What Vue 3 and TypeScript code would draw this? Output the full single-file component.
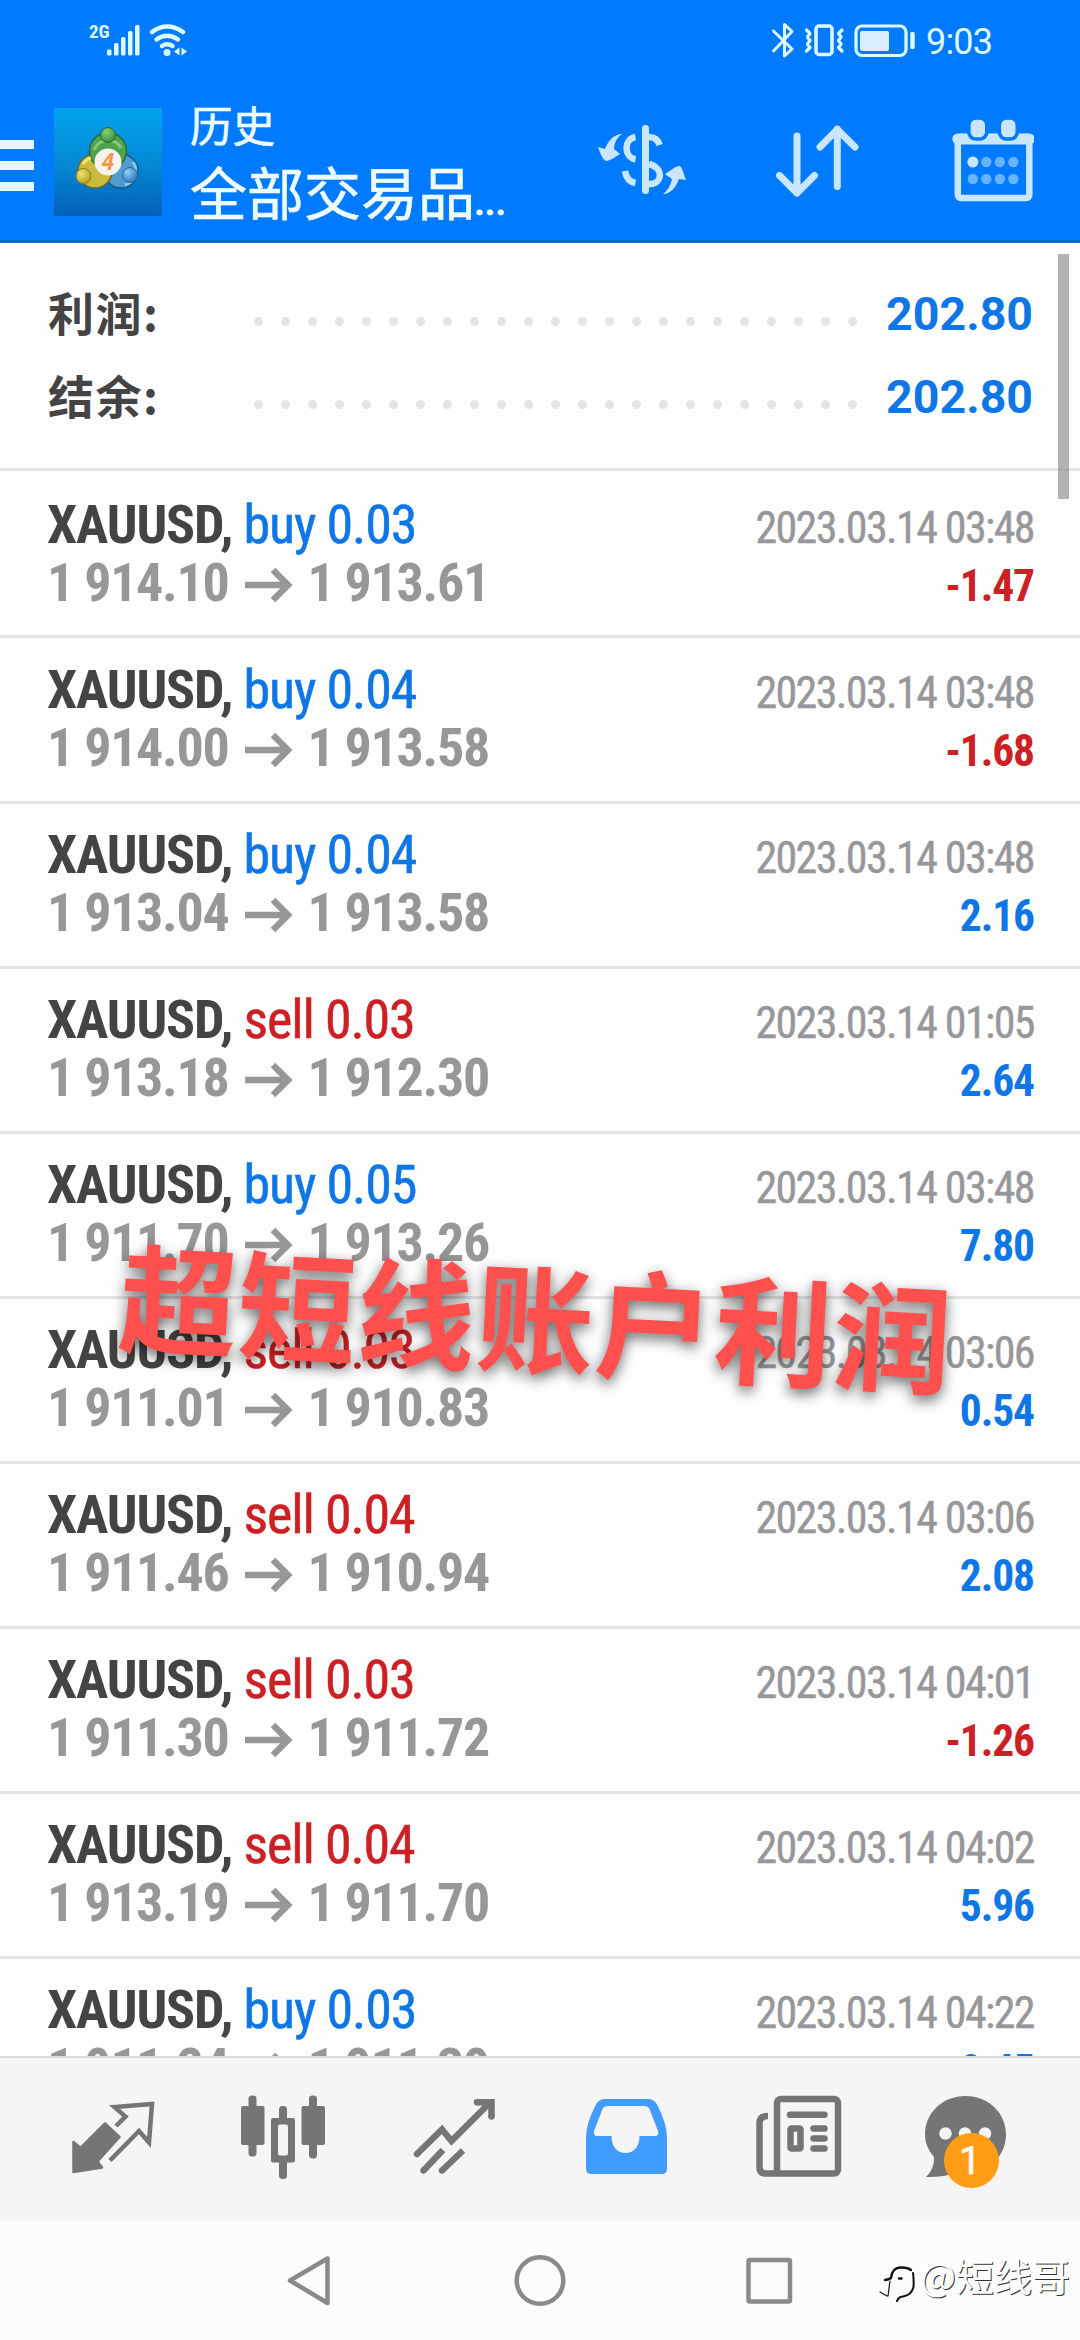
<script setup lang="ts">
interface Deal {
  side: 'buy' | 'sell'
  volume: string
  open: string
  close: string
  time: string
  profit: string
}

const totals = [
  { label: '利润:', value: '202.80' },
  { label: '结余:', value: '202.80' },
]

const deal = (side: Deal['side'], volume: string, open: string, close: string, time: string, profit: string): Deal => ({
  side, volume, open, close, time: `2023.03.14 ${time}`, profit,
})

const deals: Deal[] = [
  deal('buy', '0.03', '1 914.10', '1 913.61', '03:48', '-1.47'),
  deal('buy', '0.04', '1 914.00', '1 913.58', '03:48', '-1.68'),
  deal('buy', '0.04', '1 913.04', '1 913.58', '03:48', '2.16'),
  deal('sell', '0.03', '1 913.18', '1 912.30', '01:05', '2.64'),
  deal('buy', '0.05', '1 911.70', '1 913.26', '03:48', '7.80'),
  deal('sell', '0.03', '1 911.01', '1 910.83', '03:06', '0.54'),
  deal('sell', '0.04', '1 911.46', '1 910.94', '03:06', '2.08'),
  deal('sell', '0.03', '1 911.30', '1 911.72', '04:01', '-1.26'),
  deal('sell', '0.04', '1 913.19', '1 911.70', '04:02', '5.96'),
  deal('buy', '0.03', '1 911.24', '1 911.39', '04:22', '0.45'),
]
</script>

<template>
  <div class="screen">
    <header class="top">
      <div class="status">
        <div class="status-left">
          <span class="net">2G</span>
          <svg width="82" height="36" viewBox="106 22 82 36" fill="#dffaff">
            <rect x="107" y="49.500" width="4.500" height="6" rx="1.500" />
            <rect x="114" y="43" width="4.500" height="12.500" rx="1.500" />
            <rect x="121" y="37" width="4.500" height="18.500" rx="1.500" />
            <rect x="128" y="31" width="4.500" height="24.500" rx="1.500" />
            <rect x="135" y="25" width="4.500" height="30.500" rx="1.500" />
            <g fill="none" stroke="#dffaff" stroke-width="4.500" stroke-linecap="round">
              <path d="M152 32Q167 21 183 32" />
              <path d="M156.500 39.500Q167 32 178 39.500" />
              <path d="M162 46Q167 42.500 172.500 46" />
            </g>
            <circle cx="167" cy="52.500" r="3.500" />
            <path d="M179.500 47.500v8l-5.500-4zM181.500 47.500v8l5.500-4z" />
          </svg>
        </div>
        <div class="status-right">
          <svg width="148" height="38" viewBox="770 21 148 38" fill="none" stroke="#dffaff" stroke-width="3" stroke-linecap="round" stroke-linejoin="round">
            <path d="M772.500 31L791 49l-7.500 7V24.500l7.500 7L772.500 51" />
            <rect x="815" y="26" width="16" height="28.500" rx="3" stroke-width="3.500" />
            <path d="M805.500 30l3.500 3.500-2.500 3.500 2.500 3.500-2.500 3.500 2.500 3.500-3.500 3.500M841 30l-3.500 3.500 2.500 3.500-2.500 3.500 2.500 3.500-2.500 3.500 3.500 3.500" stroke-width="3.200" />
            <rect x="855" y="26" width="50" height="29.500" rx="6" stroke-width="3.200" />
            <rect x="859" y="31" width="29" height="20" rx="2" fill="#d9efff" stroke="none" />
            <path d="M911.500 34v13" stroke-width="4.500" />
          </svg>
          <span class="clock">9:03</span>
        </div>
      </div>

      <div class="bar">
        <div class="menu"><i /><i /><i /></div>
        <svg class="logo" width="108" height="108" viewBox="0 0 108 108">
          <defs>
            <linearGradient id="sky" x1="0" y1="0" x2="0" y2="1"><stop offset="0" stop-color="#02a3ec" /><stop offset=".5" stop-color="#0389d6" /><stop offset="1" stop-color="#0260b8" /></linearGradient>
            <radialGradient id="green" cx=".4" cy=".3" r=".8"><stop offset="0" stop-color="#8cd07a" /><stop offset="1" stop-color="#2b8435" /></radialGradient>
            <radialGradient id="yellow" cx=".35" cy=".35" r=".8"><stop offset="0" stop-color="#f1e66b" /><stop offset="1" stop-color="#ae9520" /></radialGradient>
            <radialGradient id="blue" cx=".35" cy=".3" r=".8"><stop offset="0" stop-color="#8fd0f5" /><stop offset="1" stop-color="#216fb3" /></radialGradient>
          </defs>
          <rect width="108" height="108" fill="url(#sky)" />
          <path d="M12 0v108M24 0v108M36 0v108M48 0v108M60 0v108M72 0v108M84 0v108M96 0v108M0 12h108M0 24h108M0 36h108M0 48h108M0 60h108M0 72h108M0 84h108M0 96h108" stroke="#35b4ef" stroke-opacity=".1" />
          <circle cx="67" cy="63" r="17" fill="#4d9cd2" stroke="#1c5683" stroke-width="1.500" />
          <circle cx="41" cy="63" r="17" fill="#cbbb3c" stroke="#6c6a22" stroke-width="1.500" />
          <circle cx="54" cy="43" r="18.500" fill="#50a34d" stroke="#226a38" stroke-width="1.500" />
          <path d="M40 42a15 15 0 0 1 27-2" fill="none" stroke="#86c878" stroke-width="3" />
          <path d="M79 54a15 15 0 0 1-8 23" fill="none" stroke="#8ac8ee" stroke-width="3" />
          <path d="M29 56a14 14 0 0 1 8-6" fill="none" stroke="#eee37a" stroke-width="3" />
          <circle cx="54" cy="27" r="7.500" fill="url(#green)" stroke="#246f30" />
          <circle cx="29.500" cy="68" r="7.500" fill="url(#yellow)" stroke="#927c1e" />
          <circle cx="76" cy="67" r="7.500" fill="url(#blue)" stroke="#266ca6" />
          <circle cx="54" cy="54" r="13.500" fill="#f7f3f1" />
          <text x="54" y="62" text-anchor="middle" font-family="Roboto, sans-serif" font-size="23" font-weight="700" font-style="italic" fill="#f0994f">4</text>
        </svg>
        <div class="titles">
          <span class="title">历史</span>
          <span class="subtitle">全部交易品<em>...</em></span>
        </div>
        <svg class="actions" width="438" height="90" viewBox="596 116 438 90" fill="none" stroke="#c9e6ff" stroke-linecap="round" stroke-linejoin="round">
          <path d="M645.500 128.500v62" stroke-width="7" />
          <g stroke-width="6.500" stroke-linecap="butt">
            <path d="M635.500 137c-12 2-12 20 0 22.500" />
            <path d="M625 171c1 7 5 11 10.500 12" />
            <path d="M649 137c6 0 9 3 10.500 8" />
            <path d="M649 164c15 4 14 20 0 20" />
          </g>
          <g fill="#c9e6ff" stroke="none">
            <path d="M622 134c-6 4-8 11-8 15l6 5c-5 3-10 7-14 7-4-2-6-9-8-14l7 2c3-8 9-15 17-15z" />
            <path d="M663 194c6-4 8-11 9-15l-7-5c5-3 10-8 15-8 3 3 4 9 6 14l-7-1c-3 8-8 15-16 15z" />
          </g>
          <path d="M797 136v57M779.500 175.500l17.500 17.500 17.500-17.500M837.300 186.500V129M820 147l17.300-17.500L855 147" stroke-width="7" />
          <g transform="translate(.8 0)">
            <rect x="957" y="137" width="71.500" height="61" rx="3" stroke-width="6.500" />
            <path d="M957 139h71.500" stroke-width="11" />
            <g fill="#c9e6ff" stroke="#007aff" stroke-width="3.600">
              <rect x="968" y="118" width="18" height="21" rx="7" />
              <rect x="998.500" y="118" width="18" height="21" rx="7" />
            </g>
            <g fill="#66b3ff" stroke="none">
              <circle cx="972" cy="162" r="5.500" fill="#c9e6ff" /><circle cx="985.500" cy="162" r="5.200" /><circle cx="999" cy="162" r="5.200" /><circle cx="1012.500" cy="162" r="5.200" />
              <circle cx="972" cy="179" r="5.200" /><circle cx="985.500" cy="179" r="5.200" /><circle cx="999" cy="179" r="5.200" /><circle cx="1012.500" cy="179" r="5.200" />
            </g>
          </g>
        </svg>
      </div>
    </header>

    <main class="history">
      <section class="totals">
        <div v-for="t in totals" :key="t.label" class="total">
          <span class="total-label">{{ t.label }}</span>
          <span class="dots"><i v-for="n in 23" :key="n" /></span>
          <span class="total-value">{{ t.value }}</span>
        </div>
      </section>

      <article v-for="(d, i) in deals" :key="i" class="deal">
        <div class="line">
          <span class="symbol"><b>XAUUSD,</b> <span :class="d.side">{{ d.side }} {{ d.volume }}</span></span>
          <span class="time">{{ d.time }}</span>
        </div>
        <div class="line">
          <span class="prices">
            <span class="price">{{ d.open }}</span>
            <svg width="48" height="36" viewBox="0 0 48 36" fill="none" stroke="#97979a" stroke-width="6.500"><path d="M0 18h43M28 3l15 15-15 15" /></svg>
            <span class="price">{{ d.close }}</span>
          </span>
          <span class="profit" :class="{ loss: d.profit.startsWith('-') }">{{ d.profit }}</span>
        </div>
      </article>

      <div class="thumb" />
      <div class="caption">超短线账户利润</div>
    </main>

    <nav class="tabs">
      <svg width="1080" height="163" viewBox="0 2058 1080 163" fill="none" stroke="#757575">
        <path d="M105 2123.500l14.500 13.500-22 24.500 4.500 6-28.500 4.500v-30l7 6z" fill="#757575" stroke-width="2.500" stroke-linejoin="round" />
        <path d="M116 2126l9.500-9.500-11-9.500 37.500-3-3 38.500-10-11.500-29 29.500" stroke-width="4.500" />
        <g fill="#757575" stroke="none">
          <rect x="241" y="2106" width="23.500" height="39" rx="2" /><rect x="248.500" y="2095.500" width="8" height="61" rx="3.500" />
          <rect x="301.500" y="2106" width="23.500" height="39" rx="2" /><rect x="309" y="2095.500" width="8" height="63" rx="3.500" />
          <rect x="271" y="2118" width="24" height="44.500" rx="2" /><rect x="279" y="2106" width="8" height="73" rx="3.500" />
          <rect x="278" y="2124.500" width="10" height="31" rx="2" fill="#f5f5f5" />
        </g>
        <path d="M417 2154l25-24.500 9.500 11.500 39.500-39.500M477 2102.300h14.500v14.500M423.500 2170.500l19.500-20.500M442 2170.500l21-20" stroke-width="6.500" />
        <path d="M417 2154l.1-.1M423.500 2170.500l.1-.1M442 2170.500l.1-.1M477 2102.300h.1M491.500 2116.500v.1" stroke-width="6.500" stroke-linecap="round" />
        <path fill="#419cff" stroke="none" fill-rule="evenodd" d="M605 2099h43q6 0 9 5.500 10 19 10 33v31q0 5.500-5.500 5.500h-70q-5.500 0-5.500-5.500v-31q0-14 10-33 3-5.500 9-5.500zM608 2106q-4 0-5.500 3l-8.500 22q-1 5 3 5h14.500c0 10 5 17 14 17s14-7 14-17h15q5 0 3.500-5l-8.500-22q-1.500-3-5.500-3z" />
        <rect x="777" y="2099" width="61" height="74.500" rx="4" stroke-width="6.500" />
        <path d="M768 2116q-8.500 0-8.500 7v44q0 6.500 6.500 6.500h14" stroke-width="6.500" />
        <path d="M790 2114.700h34.500M813.500 2128.500h11M813.500 2138.500h11M813.500 2148.500h11" stroke-width="6.500" stroke-linecap="round" />
        <rect x="790.500" y="2128.500" width="10" height="20" rx="1" stroke-width="6.500" />
        <path d="M965.500 2096c23 0 40.500 17 40.500 38.500s-17.500 39-40.500 39q-5 0-9-1-13 5-30.500 4.500 8.500-8 8-20-9-10-9-22.500c0-21.500 17.500-38.500 40.500-38.500z" fill="#757575" stroke="none" />
        <g fill="#f5f5f5" stroke="none"><circle cx="945.500" cy="2133.500" r="6.200" /><circle cx="965" cy="2133.500" r="6.200" /><circle cx="985" cy="2133.500" r="6.200" /></g>
        <circle cx="971.500" cy="2160.500" r="27.500" fill="#ff9e16" stroke="none" />
        <text x="970" y="2174" text-anchor="middle" font-family="Roboto, sans-serif" font-size="39" fill="#fff" stroke="#fff" stroke-width=".6">1</text>
      </svg>
    </nav>

    <footer class="system">
      <svg width="510" height="56" viewBox="284 2252 510 56" fill="none" stroke="#8a8a8a" stroke-width="4.500" stroke-linejoin="round">
        <path d="M327.500 2258.500v44.500l-37.500-22.500z" />
        <circle cx="540" cy="2280.500" r="23.300" />
        <rect x="748.500" y="2260" width="41.500" height="41.500" rx="1.500" />
      </svg>
      <div class="mark">
        <svg width="40" height="42" viewBox="877 2262 40 42" fill="none" stroke="#111" stroke-linecap="round" stroke-linejoin="round">
          <path d="M885 2281q4-.5 6-2 1-10 9-10.500 7-.5 11 2.500" stroke-width="2.400" />
          <path d="M890 2282l-2 15M880 2293l7 4" stroke-width="1.200" />
          <path d="M913 2274q1 6 .5 14-2 8-10.500 9.500-4 0-6 4.500" stroke-width="2" />
          <path d="M899 2279.500h2.500" stroke-width="2.400" />
        </svg>
        <span>@短线哥</span>
      </div>
    </footer>
  </div>
</template>

<style>
body { margin: 0; }
</style>

<style scoped>
.screen {
  width: 1080px;
  height: 2340px;
  display: flex;
  flex-direction: column;
  overflow: hidden;
  background: #fefefe;
  font-family: Roboto, "Noto Sans CJK SC", sans-serif;
}
svg { display: block; flex: none; }

.top {
  box-sizing: border-box;
  height: 243px;
  flex: none;
  background: #007aff;
  border-bottom: 3px solid #0c68cf;
  color: #effcff;
}
.status {
  height: 80px;
  display: flex;
  justify-content: space-between;
  box-sizing: border-box;
  padding: 21px 0 0 89px;
  color: #dffaff;
}
.status-left, .status-right { display: flex; }
.status-left svg { margin-top: 1px; }
.status-right { width: 309px; }
.net { width: 17px; font: 700 19px/22px "Roboto Condensed", Roboto, sans-serif; }
.clock { margin-left: 7px; font-size: 36px; line-height: 42px; letter-spacing: -0.800px; }

.bar { display: flex; height: 160px; }
.menu { width: 34px; padding-top: 60px; display: flex; flex-direction: column; gap: 12px; }
.menu i { height: 9px; background: #e6f8ff; }
.logo { margin: 28px 0 0 20px; }
.titles {
  width: 406px;
  padding-left: 28px;
  display: flex;
  flex-direction: column;
  font-family: "Noto Sans CJK SC", sans-serif;
  -webkit-text-stroke: 0.600px #effcff;
}
.title { font-size: 42.500px; line-height: 60px; margin-top: 14px; }
.subtitle { font-size: 57px; line-height: 76px; margin-top: -2px; white-space: nowrap; }
.subtitle em { font: 500 40px/40px Roboto, sans-serif; margin-left: -1px; letter-spacing: -0.500px; }
.actions { margin-top: 36px; }

.history { position: relative; flex: none; height: 1813px; overflow: hidden; }
.totals {
  box-sizing: border-box;
  height: 228px;
  padding: 29px 47px 0 48px;
  border-bottom: 3px solid #e3e3e3;
}
.total { display: flex; align-items: center; height: 83.500px; }
.total-label { width: 206px; margin-top: -6px; font: 700 46px/60px "Noto Sans CJK SC", sans-serif; letter-spacing: 1.500px; color: #444; }
.dots { width: 603px; display: flex; gap: 18px; padding-top: 15px; margin-right: 27px; }
.dots i { width: 9px; height: 9px; flex: none; border-radius: 50%; background: #e4e4e4; }
.total-value { margin-left: auto; font-size: 46.500px; font-weight: 700; color: #0f76e6; }

.deal {
  box-sizing: border-box;
  height: 165px;
  padding: 22px 47px 0 47px;
  border-bottom: 3px solid #e3e3e3;
  font-family: "Roboto Condensed", Roboto, sans-serif;
}
.totals + .deal { height: 167px; padding-top: 25px; margin-bottom: 0; }
.totals + .deal + .deal { height: 166px; padding-top: 23px; }
.line { display: flex; justify-content: space-between; align-items: baseline; height: 58px; line-height: 58px; white-space: nowrap; }
.symbol { font-size: 54px; letter-spacing: -1.150px; color: #444; }
.buy, .sell { -webkit-text-stroke: 0.500px currentColor; }
.buy { color: #0f76e6; }
.sell { color: #cc2025; }
.time { margin-right: -1px; font-size: 44px; letter-spacing: -1.600px; color: #97979a; -webkit-text-stroke: 0.400px currentColor; }
.prices { display: flex; align-items: center; font-size: 54px; font-weight: 700; letter-spacing: -1.300px; color: #97979a; }
.prices svg { margin: 4px 14.500px 0 16.500px; }
.profit { margin-right: -1px; font-size: 43.500px; font-weight: 700; letter-spacing: -1.100px; color: #0f76e6; }
.loss { color: #cc2025; }

.thumb { position: absolute; left: 1058px; top: 11px; width: 11px; height: 245px; background: rgba(128, 128, 128, .6); }
.caption {
  position: absolute;
  left: 119px;
  top: 981px;
  width: 837px;
  font: 700 118.200px/180px "Noto Sans CJK SC", sans-serif;
  letter-spacing: 1px;
  color: #ff504e;
  white-space: nowrap;
  transform: rotate(2.960deg);
  text-shadow: 0 5px 14px rgba(0, 0, 0, .6);
}

.tabs { flex: none; height: 163px; border-top: 2px solid #dcdcde; background: #f5f5f5; }
.system { flex: 1; display: flex; background: #fcfcfc; padding: 31px 0 0 284px; }
.mark { display: flex; margin-left: 83px; }
.mark svg { margin-top: 9px; }
.mark span {
  margin-left: 3px;
  margin-top: -4px;
  font: 400 38px/54px "Noto Sans CJK SC", sans-serif;
  color: #fff;
  text-shadow: 1px 1px 0 #333;
}
</style>
